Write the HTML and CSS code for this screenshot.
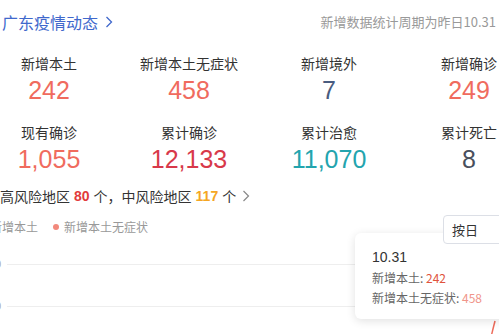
FILE: index.html
```html
<!DOCTYPE html>
<html lang="zh">
<head>
  <meta charset="UTF-8">
  <title>广东疫情动态</title>
  <link rel="stylesheet" href="styles.css">
</head>
<body>

  <div class="page">
    <div class="header">
      <a class="title">广东疫情动态
        <svg class="chev" width="8" height="12" viewBox="0 0 8 12"><path d="M1.5 1 L6.5 6 L1.5 11" stroke="#4068cc" stroke-width="1.3" fill="none"/></svg>
      </a>
      <span class="period">新增数据统计周期为昨日10.31</span>
    </div>

    <div class="stats">
      <div class="stat">
        <div class="label">新增本土</div>
        <div class="num coral">242</div>
      </div>
      <div class="stat">
        <div class="label">新增本土无症状</div>
        <div class="num coral">458</div>
      </div>
      <div class="stat">
        <div class="label">新增境外</div>
        <div class="num slate">7</div>
      </div>
      <div class="stat">
        <div class="label">新增确诊</div>
        <div class="num coral">249</div>
      </div>
      <div class="stat">
        <div class="label">现有确诊</div>
        <div class="num coral">1,055</div>
      </div>
      <div class="stat">
        <div class="label">累计确诊</div>
        <div class="num red">12,133</div>
      </div>
      <div class="stat">
        <div class="label">累计治愈</div>
        <div class="num teal">11,070</div>
      </div>
      <div class="stat">
        <div class="label">累计死亡</div>
        <div class="num dark">8</div>
      </div>
    </div>

    <div class="risk">
      高风险地区 <b class="high">80</b> 个，中风险地区 <b class="mid">117</b> 个
      <svg class="chev" width="8" height="12" viewBox="0 0 8 12"><path d="M1.5 1 L6.5 6 L1.5 11" stroke="#888" stroke-width="1.2" fill="none"/></svg>
    </div>

    <div class="chart">
      <div class="toolbar">
        <div class="legend">
          <span class="item"><i class="dot red-dot"></i>新增本土</span>
          <span class="item"><i class="dot pink-dot"></i>新增本土无症状</span>
        </div>
        <div class="select">按日</div>
      </div>

      <div class="grid">
        <div class="grid-row"><span class="axis">0</span><span class="line"></span></div>
        <div class="grid-row"><span class="axis">0</span><span class="line"></span></div>
      </div>

      <svg class="trend" width="20" height="30" viewBox="0 0 20 30">
        <path d="M4 30 L8 14" stroke="#ee6b5a" stroke-width="1.5" fill="none"/>
      </svg>

      <div class="tooltip">
        <div class="tip-date">10.31</div>
        <div class="tip-row">新增本土: <span class="v1">242</span></div>
        <div class="tip-row">新增本土无症状: <span class="v2">458</span></div>
      </div>
    </div>
  </div>

</body>
</html>
```

FILE: styles.css
```css
* {
  margin: 0;
  padding: 0;
  box-sizing: border-box;
}
body {
  font-family: "Noto Sans CJK SC", sans-serif;
  background: #fff;
  color: #333;
  width: 499px;
  height: 334px;
  overflow: hidden;
}
.page {
  width: 499px;
}
.header {
  display: flex;
  justify-content: space-between;
  align-items: center;
  padding: 12px 3px 0 2px;
  height: 32px;
}
.title {
  font-size: 16px;
  line-height: 20px;
  color: #4068cc;
  display: flex;
  align-items: center;
}
.title .chev {
  margin-left: 7px;
}
.period {
  font-size: 13px;
  line-height: 20px;
  color: #999;
}
.stats {
  display: grid;
  grid-template-columns: repeat(4, 140px);
  row-gap: 17px;
  margin-left: -21px;
  margin-top: 21px;
}
.stat {
  text-align: center;
}
.label {
  font-size: 14px;
  line-height: 20px;
  color: #333;
}
.num {
  font-family: "Liberation Sans", sans-serif;
  font-size: 25px;
  line-height: 30px;
  margin-top: 2px;
}
.coral { color: #f06b5e; }
.red { color: #d8394a; }
.slate { color: #4a5c80; }
.teal { color: #23a4ae; }
.dark { color: #4a4f5c; }
.risk {
  margin-top: 12px;
  font-size: 14px;
  line-height: 20px;
  color: #333;
  white-space: nowrap;
  display: flex;
  align-items: center;
}
.risk b {
  font-family: "Liberation Sans", sans-serif;
  font-weight: bold;
  margin: 0 4px;
}
.risk .high { color: #e23b3b; }
.risk .mid { color: #f5a623; }
.risk .chev {
  margin-left: 6px;
}
.chart {
  position: relative;
  height: 127px;
}
.toolbar {
  display: flex;
  justify-content: space-between;
  align-items: flex-start;
  padding-top: 9px;
  height: 38px;
}
.legend {
  display: flex;
  gap: 15px;
  margin-left: -21px;
  margin-top: 4px;
  font-size: 12px;
  line-height: 16px;
  color: #999;
  white-space: nowrap;
}
.item {
  display: flex;
  align-items: center;
}
.dot {
  display: inline-block;
  width: 6px;
  height: 6px;
  border-radius: 50%;
  margin-right: 5px;
}
.red-dot { background: #e0533d; }
.pink-dot { background: #f2897c; }
.select {
  position: relative;
  z-index: 2;
  background: #fff;
  width: 64px;
  height: 29px;
  margin-right: -8px;
  border: 1px solid #dcdfe6;
  border-radius: 4px;
  font-size: 13px;
  line-height: 27px;
  padding-left: 8px;
  color: #333;
}
.grid-row {
  display: flex;
  align-items: center;
  height: 42px;
}
.grid-row:first-child {
  margin-top: -1px;
}
.axis {
  font-family: "Liberation Sans", sans-serif;
  font-size: 11px;
  color: #aaa;
  margin-left: -5px;
  width: 12px;
}
.line {
  flex: 1;
  height: 1px;
  background: #eee;
}
.trend {
  position: absolute;
  left: 487px;
  top: 101px;
}
.tooltip {
  position: absolute;
  left: 355px;
  top: 27px;
  width: 160px;
  height: 86px;
  background: #fff;
  border-radius: 6px;
  box-shadow: 0 2px 10px rgba(0, 0, 0, 0.12);
  padding: 16px 0 0 17px;
}
.tip-date {
  font-family: "Liberation Sans", sans-serif;
  font-size: 14px;
  line-height: 16px;
  color: #333;
}
.tip-row {
  font-size: 12px;
  line-height: 20px;
  color: #666;
}
.tip-date + .tip-row {
  margin-top: 3px;
}
.v1 { color: #e0533d; }
.v2 { color: #f0958a; }
```
